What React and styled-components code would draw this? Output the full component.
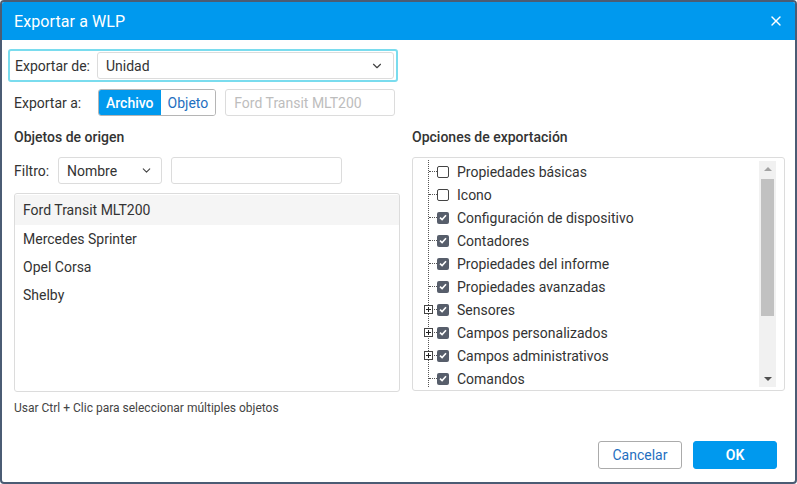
import React from 'react';
import styled, { createGlobalStyle } from 'styled-components';
import { ChevronDown, X } from 'lucide-react';

const GlobalStyle = createGlobalStyle`
  html, body {
    margin: 0;
    padding: 0;
    background: #ffffff;
  }
  body {
    font-family: Roboto, "Liberation Sans", Arial, sans-serif;
    font-size: 14px;
    color: #333;
  }
  * {
    box-sizing: border-box;
  }
`;

const Dialog = styled.div`
  width: 797px;
  height: 484px;
  border: 2px solid #4b5c74;
  border-radius: 4px;
  background: #fff;
  display: flex;
  flex-direction: column;
  overflow: hidden;
`;

const TitleBar = styled.div`
  height: 38px;
  flex-shrink: 0;
  background: #0099ee;
  color: #fff;
  display: flex;
  align-items: center;
  justify-content: space-between;
  padding: 0 11px 0 12px;

  h2 {
    margin: 0;
    font-size: 16px;
    font-weight: 400;
    letter-spacing: 0.1px;
  }
`;

const CloseButton = styled.button`
  background: none;
  border: none;
  padding: 0;
  color: #fff;
  display: flex;
  align-items: center;
  cursor: pointer;
`;

const Body = styled.div`
  flex: 1;
  padding: 9px 10px 0 12px;
  display: flex;
  flex-direction: column;
`;

const FocusRow = styled.div`
  width: 390px;
  margin-left: -6px;
  padding: 1px 2px 1px 5px;
  border: 2px solid #7adcee;
  border-radius: 3px;
  display: flex;
  align-items: center;
`;

const Row = styled.div`
  display: flex;
  align-items: center;
  margin-top: ${({ $mt }) => $mt || 0}px;
`;

const Label = styled.span`
  width: ${({ $w }) => $w}px;
  flex-shrink: 0;
  color: #333;
  font-size: 14px;
`;

const Select = styled.div`
  width: ${({ $w }) => ($w ? `${$w}px` : 'auto')};
  flex: ${({ $w }) => ($w ? '0 0 auto' : '1')};
  height: 27px;
  border: 1px solid #dcdcdc;
  border-radius: 3px;
  display: flex;
  align-items: center;
  justify-content: space-between;
  padding: 0 ${({ $pr }) => $pr || 10}px 0 8px;
  color: #333;
  font-size: 14px;

  svg {
    color: #444;
  }
`;

const Segmented = styled.div`
  display: flex;
  height: 27px;
  border: 1px solid #b5b5b5;
  border-radius: 3px;
  overflow: hidden;
`;

const SegButton = styled.div`
  display: flex;
  align-items: center;
  padding: 0 ${({ $px }) => $px}px;
  font-size: 14px;
  font-weight: ${({ $active }) => ($active ? 500 : 400)};
  color: ${({ $active }) => ($active ? '#fff' : '#1f6fbf')};
  background: ${({ $active }) => ($active ? '#0099ee' : '#fff')};
`;

const TextInput = styled.div`
  width: ${({ $w }) => $w}px;
  height: 27px;
  margin-left: ${({ $ml }) => $ml || 0}px;
  border: 1px solid #dcdcdc;
  border-radius: 3px;
  display: flex;
  align-items: center;
  padding: 0 8px;
  color: #bdbdbd;
  font-size: 14px;
`;

const Columns = styled.div`
  display: flex;
  gap: 12px;
  margin-top: 12px;
`;

const Column = styled.div`
  width: ${({ $w }) => $w}px;
  display: flex;
  flex-direction: column;
`;

const SectionTitle = styled.div`
  font-size: 14px;
  font-weight: 500;
  color: #333;
  line-height: 18px;
  height: 18px;
  margin-bottom: 11px;
`;

const ListBox = styled.div`
  margin-top: 9px;
  height: 199px;
  border: 1px solid #dcdcdc;
  border-radius: 3px;
  padding-top: 1px;
`;

const ListItem = styled.div`
  height: ${({ $selected }) => ($selected ? 30 : 28)}px;
  display: flex;
  align-items: center;
  padding-left: 8px;
  color: #333;
  font-size: 14px;
  background: ${({ $selected }) => ($selected ? '#f5f5f5' : 'transparent')};
`;

const Hint = styled.div`
  margin-top: 9px;
  font-size: 12px;
  color: #444;
`;

const TreeBox = styled.div`
  height: 234px;
  border: 1px solid #dcdcdc;
  border-radius: 3px;
  display: flex;
  padding: 3px 8px 3px 0;
`;

const TreeList = styled.div`
  flex: 1;
  position: relative;
  overflow: hidden;
  margin-top: -1px;

  &::before {
    content: '';
    position: absolute;
    left: 15px;
    top: 0;
    bottom: -4px;
    border-left: 1px dotted #555;
  }
`;

const TreeRow = styled.div`
  height: 23px;
  display: flex;
  align-items: center;
  position: relative;
  padding-left: 24px;
  color: #333;
  font-size: 14px;

  &::before {
    content: '';
    position: absolute;
    left: 16px;
    top: 11px;
    width: 8px;
    border-top: 1px dotted #555;
  }
`;

const Expander = styled.span`
  position: absolute;
  left: 11px;
  top: 7px;
  width: 9px;
  height: 9px;
  background: #fff;
  border: 1px solid #444;
  z-index: 1;

  &::before,
  &::after {
    content: '';
    position: absolute;
    background: #222;
  }
  &::before {
    left: 1px;
    top: 3px;
    width: 5px;
    height: 1px;
  }
  &::after {
    left: 3px;
    top: 1px;
    width: 1px;
    height: 5px;
  }
`;

const Check = styled.span`
  width: 12px;
  height: 12px;
  border-radius: 2px;
  margin-right: 8px;
  flex-shrink: 0;
  display: flex;
  align-items: center;
  justify-content: center;
  border: ${({ $checked }) => ($checked ? 'none' : '1px solid #444')};
  background: ${({ $checked }) => ($checked ? '#575e6b' : '#fff')};
`;

const ScrollBar = styled.div`
  width: 17px;
  background: #f1f1f1;
  display: flex;
  flex-direction: column;
  align-items: center;
`;

const ScrollArrow = styled.div`
  height: 16px;
  width: 100%;
  display: flex;
  align-items: center;
  justify-content: center;

  &::after {
    content: '';
    border-left: 4px solid transparent;
    border-right: 4px solid transparent;
    ${({ $down }) =>
      $down ? 'border-top: 4px solid #505050;' : 'border-bottom: 4px solid #a3a3a3;'}
  }
`;

const ScrollThumb = styled.div`
  width: 13px;
  height: 137px;
  background: #c1c1c1;
  margin-top: 2px;
`;

const ScrollSpace = styled.div`
  flex: 1;
`;

const Spacer = styled.div`
  flex: 1;
`;

const Footer = styled.div`
  display: flex;
  justify-content: flex-end;
  gap: 11px;
  padding: 0 18px 13px 0;
`;

const Button = styled.button`
  width: 84px;
  height: 28px;
  border-radius: 3px;
  font-family: Roboto, "Liberation Sans", Arial, sans-serif;
  font-size: 14px;
  font-weight: ${({ $primary }) => ($primary ? 600 : 400)};
  color: ${({ $primary }) => ($primary ? '#fff' : '#1f6fbf')};
  background: ${({ $primary }) => ($primary ? '#0099ee' : '#fff')};
  border: 1px solid ${({ $primary }) => ($primary ? '#0099ee' : '#ababab')};
  cursor: pointer;
`;

const CheckMark = () => (
  <svg width="8" height="7" viewBox="0 0 8 7">
    <path d="M1 3.6 L3.1 5.6 L7 1.3" fill="none" stroke="#fff" strokeWidth="1.6" />
  </svg>
);

const objects = ['Ford Transit MLT200', 'Mercedes Sprinter', 'Opel Corsa', 'Shelby'];

const options = [
  { label: 'Propiedades básicas', checked: false },
  { label: 'Icono', checked: false },
  { label: 'Configuración de dispositivo', checked: true },
  { label: 'Contadores', checked: true },
  { label: 'Propiedades del informe', checked: true },
  { label: 'Propiedades avanzadas', checked: true },
  { label: 'Sensores', checked: true, expandable: true },
  { label: 'Campos personalizados', checked: true, expandable: true },
  { label: 'Campos administrativos', checked: true, expandable: true },
  { label: 'Comandos', checked: true },
];

export default function App() {
  return (
    <>
      <GlobalStyle />
      <Dialog>
        <TitleBar>
          <h2>Exportar a WLP</h2>
          <CloseButton>
            <X size={16} strokeWidth={2} />
          </CloseButton>
        </TitleBar>
        <Body>
          <FocusRow>
            <Label $w={82}>Exportar de:</Label>
            <Select $pr={9}>
              <span>Unidad</span>
              <ChevronDown size={14} strokeWidth={2} />
            </Select>
          </FocusRow>
          <Row $mt={7}>
            <Label $w={84}>Exportar a:</Label>
            <Segmented>
              <SegButton $active $px={7}>Archivo</SegButton>
              <SegButton $px={7}>Objeto</SegButton>
            </Segmented>
            <TextInput $w={170} $ml={9}>Ford Transit MLT200</TextInput>
          </Row>
          <Columns>
            <Column $w={386}>
              <SectionTitle>Objetos de origen</SectionTitle>
              <Row>
                <Label $w={44}>Filtro:</Label>
                <Select $w={104} $pr={8}>
                  <span>Nombre</span>
                  <ChevronDown size={13} strokeWidth={2} />
                </Select>
                <TextInput $w={171} $ml={9} />
              </Row>
              <ListBox>
                {objects.map((o, i) => (
                  <ListItem key={o} $selected={i === 0}>
                    {o}
                  </ListItem>
                ))}
              </ListBox>
              <Hint>Usar Ctrl + Clic para seleccionar múltiples objetos</Hint>
            </Column>
            <Column $w={373}>
              <SectionTitle>Opciones de exportación</SectionTitle>
              <TreeBox>
                <TreeList>
                  {options.map((o) => (
                    <TreeRow key={o.label}>
                      {o.expandable && <Expander />}
                      <Check $checked={o.checked}>{o.checked && <CheckMark />}</Check>
                      {o.label}
                    </TreeRow>
                  ))}
                </TreeList>
                <ScrollBar>
                  <ScrollArrow />
                  <ScrollThumb />
                  <ScrollSpace />
                  <ScrollArrow $down />
                </ScrollBar>
              </TreeBox>
            </Column>
          </Columns>
          <Spacer />
        </Body>
        <Footer>
          <Button>Cancelar</Button>
          <Button $primary>OK</Button>
        </Footer>
      </Dialog>
    </>
  );
}
